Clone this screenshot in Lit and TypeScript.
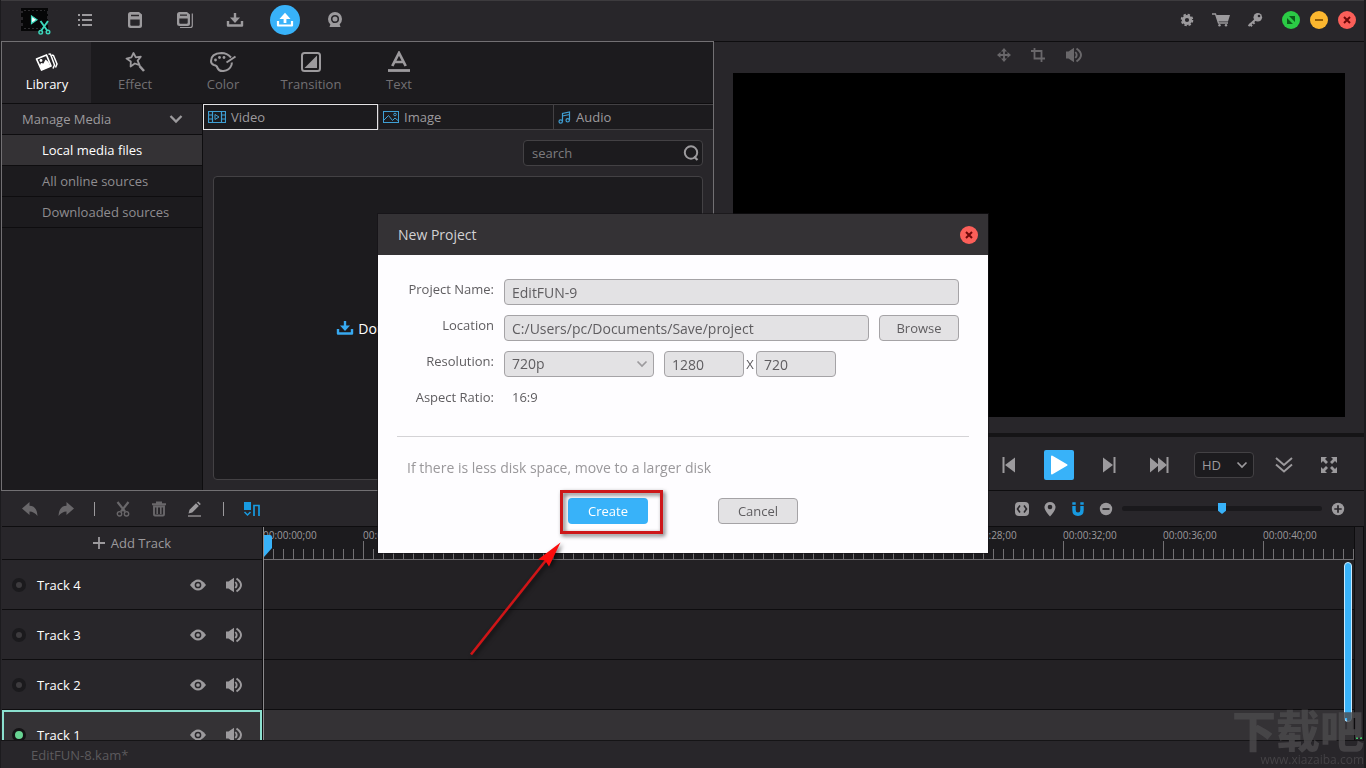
import { LitElement, html, css, svg } from "lit";
import { customElement, property, state } from "lit/decorators.js";
import { classMap } from "lit/directives/class-map.js";

const glyphs: Record<string, { w: number; h: number; body: unknown }> = {
  logo: {
    w: 32, h: 32,
    body: svg`<path d="M1 3h27v3h-1v3h1v2h-1v3h1v3h-1v3h1v6H1v-5h2v-3H1v-3h2v-3H1V8h2V6H1z" fill="#060607"/>
      <path d="M4 5.500h21M4 23.500h17" stroke="#2e2d30" stroke-dasharray="2 2"/>
      <path d="M11.500 11l5.500 3.800-5.500 3.800z" fill="#fff" stroke="#3cd6bb" stroke-width="1.200"/>
      <path d="M20.500 16l7 10M28 16l-7 10" stroke="#3cd6bb" stroke-width="1.900" fill="none"/>
      <circle cx="20.700" cy="27.300" r="1.800" fill="none" stroke="#3cd6bb" stroke-width="1.400"/>
      <circle cx="28" cy="27" r="1.800" fill="none" stroke="#3cd6bb" stroke-width="1.400"/>`,
  },
  menu: {
    w: 16, h: 14,
    body: svg`<path d="M1 2h2M1 7h2M1 12h2M5 2h10M5 7h10M5 12h10" stroke="currentColor" stroke-width="1.900"/>`,
  },
  save: {
    w: 16, h: 18,
    body: svg`<path d="M3.500 1H12l3 2.500v11q0 2.500-2.500 2.500h-9Q1 17 1 14.500v-11Q1 1 3.500 1z" fill="currentColor"/><path d="M4 3.800h8v1.500H4zM3.300 8.500h9.400v5.200q0 1-1 1H4.300q-1 0-1-1z" fill="#28262a"/>`,
  },
  saveAs: {
    w: 18, h: 18,
    body: svg`<path d="M3.500 1H11l3 2.500v9q0 2.500-2.500 2.500h-8Q1 15 1 12.500v-9Q1 1 3.500 1z" fill="currentColor"/><path d="M4 3.500h7v1.300H4zM3.300 7.500h8.400v4.300q0 1-1 1H4.300q-1 0-1-1z" fill="#28262a"/><path d="M16.300 2.500v12q0 2-2 2H4" fill="none" stroke="currentColor" stroke-width="1.200"/>`,
  },
  download: {
    w: 18, h: 16,
    body: svg`<path d="M9 1v6" stroke="currentColor" stroke-width="2.400"/><path d="M4 5.500h10L9 11z" fill="currentColor"/><path d="M2 9v4.500h14V9" fill="none" stroke="currentColor" stroke-width="2.400" stroke-linejoin="round"/>`,
  },
  upload: {
    w: 18, h: 16,
    body: svg`<path d="M9 11V5" stroke="currentColor" stroke-width="2.800"/><path d="M3.500 7h11L9 .8z" fill="currentColor"/><path d="M2 9v4.500h14V9" fill="none" stroke="currentColor" stroke-width="2.200" stroke-linejoin="round"/>`,
  },
  webcam: {
    w: 16, h: 18,
    body: svg`<circle cx="8" cy="8" r="7" fill="currentColor"/><circle cx="8" cy="8" r="3.300" fill="none" stroke="#28262a" stroke-width="1.600"/><path d="M3.500 13L2.500 16h11l-1-3z" fill="currentColor"/>`,
  },
  gear: {
    w: 14, h: 14,
    body: svg`<circle cx="7" cy="7" r="3.600" fill="none" stroke="currentColor" stroke-width="3"/><circle cx="7" cy="7" r="5.400" fill="none" stroke="currentColor" stroke-width="1.800" stroke-dasharray="2.400 1.840"/>`,
  },
  cart: {
    w: 18, h: 14,
    body: svg`<path d="M0 1h3.500l3 9H16" fill="none" stroke="currentColor" stroke-width="1.300"/><path d="M4 2h14l-2 6.500H6z" fill="currentColor"/><circle cx="7.500" cy="12.300" r="1.200" fill="currentColor"/><circle cx="14" cy="12.300" r="1.200" fill="currentColor"/>`,
  },
  key: {
    w: 16, h: 16,
    body: svg`<circle cx="10.800" cy="5.200" r="4.300" fill="currentColor"/><circle cx="12" cy="4" r="1.300" fill="#28262a"/><path d="M8.500 7.500L1.500 14M2.500 11.500l2.500 2.700M5.500 9.500l2 2.300" stroke="currentColor" stroke-width="2"/>`,
  },
  zoomWin: {
    w: 18, h: 18,
    body: svg`<path d="M5 7v6h6zM7 5h6v6z" fill="#0b5d1a"/>`,
  },
  minusWin: { w: 18, h: 18, body: svg`<path d="M5 9h8" stroke="#8a5300" stroke-width="1.800"/>` },
  closeWin: { w: 18, h: 18, body: svg`<path d="M6 6l6 6M12 6l-6 6" stroke="#6d0808" stroke-width="2"/>` },
  library: {
    w: 24, h: 22,
    body: svg`<path d="M1.500 8L11.500 4l4.500 11-9.500 4z" fill="none" stroke="#fff" stroke-width="1.700" stroke-linejoin="round"/><path d="M4.500 15l1.500-3 2.500.5 2-4 3 2.500 2 4.500L7 19z" fill="#fff"/><circle cx="6" cy="9.500" r="1.400" fill="#fff"/><path d="M13.500 3l2 .3L19.500 14l-1.500 3.500M17 4l1.500.5L22 13l-1.500 3.500" fill="none" stroke="#fff" stroke-width="1.500"/>`,
  },
  effect: {
    w: 22, h: 22,
    body: svg`<path d="M9.500 2l2.300 4.300 5-.6-3.200 3.900 2 4.600-4.800-1.700-4.200 3 .2-5L2.500 7.600l4.900-1.200z" fill="none" stroke="currentColor" stroke-width="1.800" stroke-linejoin="round"/><path d="M15.500 15l4.500 5" stroke="currentColor" stroke-width="2.600"/>`,
  },
  color: {
    w: 28, h: 22,
    body: svg`<path d="M22 6.500Q18 2 12.500 2 2 2.500 2 10q0 3 3 4 3 .3 3.500 3 1.500 3.500 6 3 6-.5 8-6 .4-1 .2-2.500" fill="none" stroke="currentColor" stroke-width="2"/><circle cx="6.500" cy="9" r="1.400" fill="currentColor"/><circle cx="10.500" cy="6.500" r="1.400" fill="currentColor"/><circle cx="15" cy="6.500" r="1.400" fill="currentColor"/><path d="M26.500 5.500l-9 6" stroke="currentColor" stroke-width="2"/>`,
  },
  transition: {
    w: 22, h: 22,
    body: svg`<rect x="2" y="2" width="18" height="18" rx="2.500" fill="none" stroke="currentColor" stroke-width="2"/><path d="M17 4.500V17H4.500z" fill="currentColor"/>`,
  },
  text: {
    w: 24, h: 22,
    body: svg`<path d="M5.300 15L12 2l6.700 13M8 11h8" fill="none" stroke="currentColor" stroke-width="2.700"/><path d="M1 19.500h22" stroke="currentColor" stroke-width="2.800"/>`,
  },
  chevron: { w: 14, h: 10, body: svg`<path d="M1.500 2l5.500 5.500L12.500 2" fill="none" stroke="currentColor" stroke-width="2.300"/>` },
  chevronSmall: { w: 12, h: 8, body: svg`<path d="M1.500 1.500L6 6l4.500-4.500" fill="none" stroke="currentColor" stroke-width="1.700"/>` },
  video: {
    w: 18, h: 12,
    body: svg`<path d="M.5.500h17v11H.5zM4.500.500v11M13.500.500v11M.5 4h4M.5 8h4M13.500 4h4M13.500 8h4" fill="none" stroke="#3f9fd4" stroke-width="1.200"/><path d="M7 3.500L11 6 7 8.500z" fill="none" stroke="#3f9fd4"/>`,
  },
  image: {
    w: 16, h: 12,
    body: svg`<rect x=".5" y=".5" width="15" height="11" fill="none" stroke="#3f9fd4"/><path d="M.5 9.500L5.500 4.500l4 5 2.500-2.500 3.500 3" fill="none" stroke="#3f9fd4"/><circle cx="12" cy="3.500" r="1.300" fill="none" stroke="#3f9fd4"/>`,
  },
  audio: {
    w: 13, h: 13,
    body: svg`<path d="M4.500 10.500V2.500l7-1.500V9M4.500 5l7-1.500" fill="none" stroke="#3f9fd4" stroke-width="1.200"/><circle cx="2.700" cy="10.500" r="1.700" fill="none" stroke="#3f9fd4" stroke-width="1.200"/><circle cx="9.700" cy="9.300" r="1.700" fill="none" stroke="#3f9fd4" stroke-width="1.200"/>`,
  },
  search: {
    w: 16, h: 16,
    body: svg`<circle cx="8" cy="7.500" r="6.200" fill="none" stroke="currentColor" stroke-width="2"/><path d="M11 11.500l3.500 3.500" stroke="currentColor" stroke-width="2.200"/>`,
  },
  move: {
    w: 14, h: 14,
    body: svg`<path d="M7 2v10M2 7h10" stroke="currentColor" stroke-width="1.800"/><path d="M7 0l3 3.500H4zM7 14l3-3.500H4zM0 7l3.500-3v6zM14 7l-3.500-3v6z" fill="currentColor"/>`,
  },
  crop: { w: 14, h: 14, body: svg`<path d="M3.500 0v10.500H14M0 3h10.500V14" fill="none" stroke="currentColor" stroke-width="1.800"/>` },
  speaker: {
    w: 18, h: 16,
    body: svg`<path d="M1 4.500h2.500L9 .8v14.400L3.500 11.500H1z" fill="currentColor"/><path d="M10.300 5q2.800 3 0 6" fill="none" stroke="currentColor" stroke-width="1.800"/><path d="M11.500 1.500q9 6.500 0 13" fill="none" stroke="currentColor" stroke-width="2"/>`,
  },
  eye: {
    w: 18, h: 12,
    body: svg`<path d="M1 6q8-11 16 0-8 11-16 0z" fill="currentColor"/><circle cx="9" cy="6" r="2.600" fill="none" stroke="#28262a" stroke-width="1.500"/>`,
  },
  prev: { w: 14, h: 16, body: svg`<path d="M1.500 0v16" stroke="currentColor" stroke-width="2"/><path d="M13 .5v15L3 8z" fill="currentColor"/>` },
  play: { w: 20, h: 22, body: svg`<path d="M3 2.500L17.500 11 3 19.500z" fill="#fff" stroke="#fff" stroke-width="2" stroke-linejoin="round"/>` },
  next: { w: 14, h: 16, body: svg`<path d="M12.500 0v16" stroke="currentColor" stroke-width="2"/><path d="M1 .5v15L11 8z" fill="currentColor"/>` },
  last: { w: 20, h: 16, body: svg`<path d="M18.500 0v16" stroke="currentColor" stroke-width="2"/><path d="M1 .5v15L10 8zM9 .5v15L18 8z" fill="currentColor"/>` },
  collapse: { w: 18, h: 18, body: svg`<path d="M1 2l8 7 8-7M1 8.500l8 7 8-7" fill="none" stroke="currentColor" stroke-width="1.900"/>` },
  expand: {
    w: 18, h: 18,
    body: svg`<path d="M1 1h6L5 3l3 3-2 2-3-3-2 2zM17 1h-6l2 2-3 3 2 2 3-3 2 2zM1 17h6l-2-2 3-3-2-2-3 3-2-2zM17 17h-6l2-2-3-3 2-2 3 3 2-2z" fill="currentColor"/>`,
  },
  undo: { w: 16, h: 14, body: svg`<path d="M0 6.500L7.500 0v3.800Q15 4 15.500 14 12 9.500 7.500 9.500V13z" fill="currentColor"/>` },
  redo: { w: 16, h: 14, body: svg`<path d="M16 6.500L8.500 0v3.800Q1 4 .5 14 4 9.500 8.500 9.500V13z" fill="currentColor"/>` },
  cut: {
    w: 14, h: 16,
    body: svg`<path d="M1.500 1l7.500 9.500M12.500 1L5 10.500" stroke="currentColor" stroke-width="2.200"/><circle cx="3.500" cy="12.800" r="2.200" fill="none" stroke="currentColor" stroke-width="1.400"/><circle cx="10.500" cy="12.800" r="2.200" fill="none" stroke="currentColor" stroke-width="1.400"/>`,
  },
  trash: { w: 16, h: 16, body: svg`<path d="M1 3.200h14M5 1.500h6M3 5.500h10v8q0 1-1 1H4q-1 0-1-1z" fill="none" stroke="currentColor" stroke-width="1.900"/><path d="M6.200 6v7M9.800 6v7" stroke="currentColor" stroke-width="1.600"/>` },
  edit: { w: 16, h: 16, body: svg`<path d="M1.500 12.500l1-3.800L9 2.300l2.800 2.800-6.500 6.400zM10 1.500l1.200-1 2.600 2.600-1.100 1.200z" fill="currentColor"/><path d="M1 15h13" stroke="currentColor" stroke-width="1.300"/>` },
  snap: { w: 18, h: 16, body: svg`<path d="M1 1h7v8H1z" fill="currentColor"/><path d="M1.500 11l3 3 3-3" fill="none" stroke="currentColor" stroke-width="1.500"/><path d="M11 15V4.500h5V15" fill="none" stroke="currentColor" stroke-width="1.700"/>` },
  fit: { w: 16, h: 16, body: svg`<rect x="1" y="1" width="14" height="14" rx="4" fill="currentColor"/><path d="M6 4.500L3.500 8 6 11.500M10 4.500L12.500 8 10 11.500" fill="none" stroke="#28262a" stroke-width="1.600"/>` },
  pin: { w: 12, h: 16, body: svg`<path d="M6 15.500Q0 9 .5 5.500 1.500 1 6 1t5.500 4.500Q12 9 6 15.500z" fill="currentColor"/><circle cx="6" cy="6" r="2.300" fill="#28262a"/>` },
  magnet: { w: 14, h: 16, body: svg`<path d="M3 5v4q0 4.200 4 4.200T11 9V5" fill="none" stroke="currentColor" stroke-width="3.400"/><path d="M1.300 2.500h3.400M9.300 2.500h3.400" stroke="currentColor" stroke-width="2.500"/>` },
  minus: { w: 14, h: 14, body: svg`<circle cx="7" cy="7" r="6.200" fill="currentColor"/><path d="M3.500 7h7" stroke="#28262a" stroke-width="1.800"/>` },
  plus: { w: 14, h: 14, body: svg`<circle cx="7" cy="7" r="6.200" fill="currentColor"/><path d="M3.300 7h7.400M7 3.300v7.400" stroke="#28262a" stroke-width="1.700"/>` },
  add: { w: 12, h: 12, body: svg`<path d="M0 6h12M6 0v12" stroke="currentColor" stroke-width="1.800"/>` },
};

const icon = (name: string) => {
  const g = glyphs[name];
  return html`<svg class="icon" width=${g.w} height=${g.h} viewBox="0 0 ${g.w} ${g.h}" aria-hidden="true">${g.body}</svg>`;
};

const shared = css`
  * { box-sizing: border-box; }
  button, input, select { font: inherit; color: inherit; margin: 0; }
  button { padding: 0; border: 0; background: none; cursor: pointer; }
  .icon { display: block; flex: none; }
  .round {
    width: 18px; height: 18px; border-radius: 50%;
    display: grid; place-items: center;
  }
  .round.green { background: #2bcb45; }
  .round.amber { background: #fcb72f; }
  .round.red { background: #fb5f59; }
`;

@customElement("media-panel")
export class MediaPanel extends LitElement {
  @state() private tab = "Library";
  @state() private kind = "Video";

  static styles = [shared, css`
    :host {
      display: grid; grid-template-rows: 62px minmax(0, 1fr);
      border: 1px solid #727073; background: #1c1b1e; min-width: 0;
    }
    .tabs { display: flex; padding-left: 1px; border-bottom: 1px solid #0e0d0f; }
    .tab {
      width: 88px; display: flex; flex-direction: column; align-items: center;
      padding-top: 9px; gap: 1px; line-height: 20px; color: #727073;
    }
    .tab .icon { color: #9c9a9d; }
    .tab.on { background: #28262a; color: #fff; box-shadow: -1px 0 #28262a; }
    .body { display: grid; grid-template-columns: 201px minmax(0, 1fr); }
    .side { border-right: 1px solid #0e0d0f; }
    .row {
      width: 100%; height: 31px; display: flex; align-items: center; text-align: left;
      padding: 0 19px 0 40px; border-bottom: 1px solid #0e0d0f; color: #8f8d90;
    }
    .row.head { padding-left: 20px; justify-content: space-between; background: #28262a; color: #9c9a9d; }
    .row.on { background: #343235; color: #fff; }
    .main { display: grid; grid-template-rows: 26px 26px minmax(0, 1fr); row-gap: 10px; background: #28262a; }
    .kinds { display: grid; grid-template-columns: 175px 175px minmax(0, 1fr); }
    .kind {
      display: flex; align-items: center; gap: 5px; padding-left: 4px;
      border: 1px solid #434144; border-right-width: 0; background: #1c1b1e; color: #9c9a9d;
    }
    .kind.on { border: 1px solid #e4e3e5; }
    .search {
      justify-self: end; width: 180px; margin-right: 10px; display: flex; align-items: center;
      border: 1px solid #434144; border-radius: 4px; background: #1c1b1e; padding: 0 3px 0 8px; color: #9c9a9d;
    }
    .search input { flex: 1; min-width: 0; border: 0; padding: 0; background: none; outline: 0; }
    .search input::placeholder { color: #7d7b7e; }
    .drop {
      margin: 0 10px 10px; display: flex; align-items: center; justify-content: center; gap: 4px;
      border: 1px solid #434144; border-radius: 4px; background: #1c1b1e; color: #fff; font-size: 14px;
    }
    .drop .icon { color: #37a9f0; }
  `];

  render() {
    const tabs = [["Library", "library"], ["Effect", "effect"], ["Color", "color"], ["Transition", "transition"], ["Text", "text"]];
    const kinds = [["Video", "video"], ["Image", "image"], ["Audio", "audio"]];
    return html`
      <nav class="tabs">
        ${tabs.map(([t, i]) => html`<button class=${classMap({ tab: true, on: t === this.tab })} @click=${() => (this.tab = t)}>${icon(i)}<span>${t}</span></button>`)}
      </nav>
      <div class="body">
        <aside class="side">
          <button class="row head"><span>Manage Media</span>${icon("chevron")}</button>
          <button class="row on">Local media files</button>
          <button class="row">All online sources</button>
          <button class="row">Downloaded sources</button>
        </aside>
        <section class="main">
          <div class="kinds">
            ${kinds.map(([k, i]) => html`<button class=${classMap({ kind: true, on: k === this.kind })} @click=${() => (this.kind = k)}>${icon(i)}<span>${k}</span></button>`)}
          </div>
          <label class="search"><input type="text" placeholder="search" aria-label="search" />${icon("search")}</label>
          <button class="drop">${icon("download")}<span>Double click here to import media</span></button>
        </section>
      </div>`;
  }
}

@customElement("preview-panel")
export class PreviewPanel extends LitElement {
  static styles = [shared, css`
    :host {
      display: grid; grid-template-rows: 31px minmax(0, 1fr) 16px 58px;
      border-top: 1px solid #0e0d0f; min-width: 0; color: #9c9a9d;
    }
    .adjust { display: flex; justify-content: center; align-items: center; gap: 20px; color: #69676a; padding: 0 0 6px 2px; }
    .screen { background: #000; margin: 0 19px; }
    .controls {
      grid-row: 4; display: flex; justify-content: flex-end; align-items: center; gap: 20px; padding: 2px 20px 0 0;
      border-top: 4px solid #151416; border-bottom: 1px solid #0e0d0f;
    }
    .ctl { width: 30px; height: 30px; display: grid; place-items: center; }
    .ctl.play { background: #38b2f9; border-radius: 2px; }
    .group { display: flex; align-items: center; gap: 15px; }
    .quality { position: relative; width: 60px; height: 26px; }
    .quality select {
      appearance: none; width: 100%; height: 100%; border: 1px solid #434144; border-radius: 4px;
      background: #1c1b1e; padding: 0 7px;
    }
    .quality .icon { position: absolute; right: 6px; top: 9px; pointer-events: none; }
  `];

  render() {
    return html`
      <div class="adjust">
        <button aria-label="Move">${icon("move")}</button>
        <button aria-label="Crop">${icon("crop")}</button>
        <button aria-label="Volume">${icon("speaker")}</button>
      </div>
      <div class="screen"></div>
      <div class="controls">
        <button class="ctl" aria-label="Previous frame">${icon("prev")}</button>
        <button class="ctl play" aria-label="Play">${icon("play")}</button>
        <button class="ctl" aria-label="Next frame">${icon("next")}</button>
        <button class="ctl" aria-label="Go to end">${icon("last")}</button>
        <div class="group">
          <div class="quality">
            <select aria-label="Preview quality"><option>HD</option><option>SD</option></select>${icon("chevronSmall")}
          </div>
          <button class="ctl" aria-label="Collapse">${icon("collapse")}</button>
          <button class="ctl" aria-label="Full screen">${icon("expand")}</button>
        </div>
      </div>`;
  }
}

@customElement("time-line")
export class TimeLine extends LitElement {
  @state() private active = 1;

  static styles = [shared, css`
    :host { display: grid; grid-template-rows: 36px minmax(0, 1fr); min-width: 0; min-height: 0; color: #9c9a9d; }
    .bar {
      display: flex; align-items: center; justify-content: space-between;
      padding: 0 16px; border-bottom: 1px solid #0e0d0f;
    }
    .tools { display: flex; align-items: center; gap: 12px; color: #69676a; }
    .tool { width: 24px; height: 24px; display: grid; place-items: center; }
    .tool.lit { color: #9c9a9d; }
    .tool.blue { color: #189ae0; }
    .sep { width: 1px; height: 14px; margin: 0 4px; background: #9c9a9d; }
    .zoom { display: flex; align-items: center; gap: 8px; }
    .zoom .tool { width: 20px; }
    .scale { display: flex; align-items: center; gap: 6px; }
    .scale input { appearance: none; width: 200px; height: 16px; background: none; }
    .scale input::-webkit-slider-runnable-track { height: 5px; border-radius: 3px; background: #1a191c; }
    .scale input::-webkit-slider-thumb {
      appearance: none; width: 8px; height: 11px; margin-top: -3px; background: #38b2f9;
      clip-path: polygon(0 0, 100% 0, 100% 70%, 50% 100%, 0 70%);
    }
    .area { display: grid; grid-template-columns: 261px minmax(0, 1fr) 10px; min-height: 0; }
    .heads { border-right: 1px solid #0e0d0f; overflow: hidden; min-height: 0; }
    .add {
      width: 100%; height: 33px; display: flex; align-items: center; justify-content: center; gap: 6px;
      border-bottom: 1px solid #0e0d0f;
    }
    .head {
      height: 50px; display: flex; align-items: center;
      padding: 0 19px 0 10px; border-bottom: 1px solid #0e0d0f;
    }
    .head label { flex: 1; color: #fff; padding-left: 11px; }
    .pair { display: flex; gap: 18px; align-items: center; }
    .head.on { background: #343235; border: 2px solid #8be0cf; padding: 0 17px 0 8px; }
    .dot {
      appearance: none; width: 14px; height: 14px; border-radius: 50%;
      background: #3d3b3e; border: 4px solid #1b1a1d;
    }
    .dot:checked { background: #68d392; border-width: 3px; border-color: #141315; }
    .lanes { position: relative; border-left: 1px solid #8c8a8d; background: #232124; overflow: hidden; min-height: 0; }
    .ruler {
      height: 33px; display: flex; margin-left: -1px; border-bottom: 1px solid #727073; font-size: 10px; line-height: 14px; padding-top: 1px;
      background:
        repeating-linear-gradient(90deg, #727073 0 1px, transparent 1px 10px) 0 100% / 100% 10px no-repeat,
        repeating-linear-gradient(90deg, #727073 0 1px, transparent 1px 100px) 0 100% / 100% 18px no-repeat,
        #1c1b1e;
    }
    .ruler span { flex: 0 0 100px; }
    .lane { height: 50px; border-bottom: 1px solid #0e0d0f; }
    .lane.on { background: #343235; }
    .needle { position: absolute; left: 0; top: 8px; }
    .scroll {
      position: absolute; right: 2px; top: 35px; width: 8px; height: 160px;
      border: 1px solid #c9e8fc; border-radius: 4px; background: #38b2f9;
    }
    .meter {
      border-left: 1px solid #0e0d0f; border-right: 1px solid #0e0d0f;
      display: flex; align-items: flex-end; justify-content: center; gap: 2px; padding-bottom: 1px;
    }
    .meter i { width: 2px; height: 2px; background: #3fc765; }
  `];

  render() {
    const tracks = [4, 3, 2, 1];
    const marks = Array.from({ length: 11 }, (_, i) => `00:00:${String(i * 4).padStart(2, "0")};00`);
    return html`
      <div class="bar">
        <div class="tools">
          <button class="tool" aria-label="Undo">${icon("undo")}</button>
          <button class="tool" aria-label="Redo">${icon("redo")}</button>
          <span class="sep"></span>
          <button class="tool" aria-label="Cut">${icon("cut")}</button>
          <button class="tool" aria-label="Delete">${icon("trash")}</button>
          <button class="tool lit" aria-label="Edit">${icon("edit")}</button>
          <span class="sep"></span>
          <button class="tool blue" aria-label="Snap">${icon("snap")}</button>
        </div>
        <div class="zoom">
          <button class="tool" aria-label="Fit">${icon("fit")}</button>
          <button class="tool" aria-label="Marker">${icon("pin")}</button>
          <button class="tool blue" aria-label="Magnet">${icon("magnet")}</button>
          <div class="scale">
            <button class="tool" aria-label="Zoom out">${icon("minus")}</button>
            <input type="range" min="0" max="100" .value=${"50"} aria-label="Timeline zoom" />
            <button class="tool" aria-label="Zoom in">${icon("plus")}</button>
          </div>
        </div>
      </div>
      <div class="area">
        <div class="heads">
          <button class="add">${icon("add")}<span>Add Track</span></button>
          ${tracks.map((n) => html`
            <div class=${classMap({ head: true, on: n === this.active })}>
              <input class="dot" type="radio" name="track" id="track-${n}" .checked=${n === this.active} @change=${() => (this.active = n)} />
              <label for="track-${n}">Track ${n}</label>
              <div class="pair">
                <button aria-label="Show track ${n}">${icon("eye")}</button>
                <button aria-label="Mute track ${n}">${icon("speaker")}</button>
              </div>
            </div>`)}
        </div>
        <div class="lanes">
          <div class="ruler">${marks.map((m) => html`<span>${m}</span>`)}</div>
          ${tracks.map((n) => html`<div class=${classMap({ lane: true, on: n === this.active })}></div>`)}
          <svg class="needle" width="8" height="22" viewBox="0 0 8 22"><path d="M0 0h6q2 0 2 2v11l-8 9z" fill="#38b2f9" /></svg>
          <div class="scroll"></div>
        </div>
        <div class="meter"><i></i><i></i></div>
      </div>`;
  }
}

@customElement("project-dialog")
export class ProjectDialog extends LitElement {
  @property() name = "EditFUN-9";
  @property() location = "C:/Users/pc/Documents/Save/project";

  static styles = [shared, css`
    :host {
      position: fixed; inset: 0; padding-bottom: 1px;
      display: grid; place-items: center; color: #5f5d60;
    }
    .dialog { position: relative; width: 610px; background: #fefdff; box-shadow: 0 0 0 1px rgba(20, 19, 21, 0.6); }
    header {
      height: 41px; display: flex; align-items: center; justify-content: space-between;
      padding: 0 10px 0 20px; background: #343235; color: #d2d1d3; font-size: 14px;
    }
    form { padding: 24px 29px 29px; }
    .fields { display: grid; grid-template-columns: 87px minmax(0, 1fr); column-gap: 10px; row-gap: 10px; line-height: 20px; }
    .name { text-align: right; white-space: nowrap; justify-self: end; }
    .line { display: flex; align-items: center; gap: 10px; }
    .box {
      height: 26px; border: 1px solid #a5a3a6; border-radius: 4px; background: #e3e2e4;
      padding: 0 7px; min-width: 0; flex: 1; outline: 0; font-size: 14px;
    }
    .box.short { flex: 0 0 80px; }
    .size { display: flex; align-items: center; }
    .size .by { width: 12px; text-align: center; }
    .preset { position: relative; width: 150px; display: flex; }
    .preset select { appearance: none; }
    .preset .icon { position: absolute; right: 6px; top: 9px; color: #9c9a9d; pointer-events: none; }
    .btn { width: 80px; height: 26px; border: 1px solid #a5a3a6; border-radius: 4px; background: #e3e2e4; }
    .btn.primary { border: 0; background: #38b2f9; color: #fff; }
    .ratio { padding-left: 8px; }
    hr { margin: 29px -10px 21px; border: 0; border-top: 1px solid #d4d3d6; }
    .note { margin: 0 0 20px; font-size: 14px; line-height: 20px; color: #9a989b; }
    .actions { display: flex; justify-content: center; gap: 70px; }
    .callout { position: absolute; left: 84px; top: 268px; pointer-events: none; overflow: visible; filter: drop-shadow(2px 2px 2px rgba(0, 0, 0, 0.6)); }
  `];

  render() {
    return html`
      <div class="dialog" role="dialog" aria-label="New Project">
        <header><span>New Project</span><button class="round red" aria-label="Close">${icon("closeWin")}</button></header>
        <form @submit=${(e: Event) => e.preventDefault()}>
          <div class="fields">
            <label class="name" for="name">Project Name:</label>
            <div class="line"><input class="box" id="name" type="text" .value=${this.name} /></div>
            <label class="name" for="location">Location</label>
            <div class="line"><input class="box" id="location" type="text" .value=${this.location} /><button class="btn" type="button">Browse</button></div>
            <label class="name" for="preset">Resolution:</label>
            <div class="line">
              <div class="preset"><select class="box" id="preset"><option>720p</option><option>1080p</option></select>${icon("chevronSmall")}</div>
              <div class="size">
                <input class="box short" type="text" aria-label="Width" .value=${"1280"} /><span class="by">X</span><input class="box short" type="text" aria-label="Height" .value=${"720"} />
              </div>
            </div>
            <span class="name">Aspect Ratio:</span>
            <span class="ratio">16:9</span>
          </div>
          <hr />
          <p class="note">If there is less disk space, move to a larger disk</p>
          <div class="actions"><button class="btn primary">Create</button><button class="btn" type="button">Cancel</button></div>
        </form>
        <svg class="callout" width="206" height="178" viewBox="462 482 206 178" aria-hidden="true">
          <rect x="561.500" y="491.500" width="100" height="41" fill="none" stroke="#cd1719" stroke-width="3" />
          <path d="M471 654.500L547 559" stroke="#cf1517" stroke-width="2.600" />
          <path d="M560.500 542.500L549 566.500l-4-6-7-1z" fill="#fb0d0d" />
        </svg>
      </div>`;
  }
}

@customElement("app-root")
export class AppRoot extends LitElement {
  static styles = [shared, css`
    :host {
      display: grid; grid-template-rows: 41px minmax(0, 1fr) 249px 28px; height: 100vh; overflow: hidden;
      border-left: 1px solid #1c1b1e; border-right: 2px solid #1c1b1e; background: #28262a; color: #9c9a9d;
      font: 13px "Open Sans", "Noto Sans", sans-serif; box-sizing: border-box; position: relative;
    }
    .top { display: flex; align-items: center; padding: 0 8px 2px 19px; border-top: 1px solid #3d3b3e; }
    .menu { display: flex; align-items: center; gap: 20px; flex: 1; }
    .item { width: 30px; height: 30px; display: grid; place-items: center; border-radius: 50%; }
    .item.blue { background: #38b2f9; color: #fff; }
    .links, .window { display: flex; align-items: center; gap: 10px; }
    .links { margin-right: 15px; }
    .link { width: 24px; height: 24px; display: grid; place-items: center; }
    .work { display: grid; grid-template-columns: minmax(0, 713fr) minmax(0, 650fr); min-height: 0; }
    time-line { padding-left: 1px; }
    footer { display: flex; align-items: center; padding-left: 30px; color: #5c5a5d; border-top: 1px solid #151416; }
    .mark { position: absolute; right: 0; bottom: 0; color: #4c4a4d; opacity: 0.8; pointer-events: none; text-align: right; }
    .mark b { display: block; font: 900 44px/44px "Noto Sans CJK SC", sans-serif; }
    .mark span { display: block; font-size: 12px; line-height: 17px; }
  `];

  render() {
    return html`
      <header class="top">
        <div class="menu">
          <div class="item">${icon("logo")}</div>
          <button class="item" aria-label="Menu">${icon("menu")}</button>
          <button class="item" aria-label="Save">${icon("save")}</button>
          <button class="item" aria-label="Save as">${icon("saveAs")}</button>
          <button class="item" aria-label="Import">${icon("download")}</button>
          <button class="item blue" aria-label="Export">${icon("upload")}</button>
          <button class="item" aria-label="Record">${icon("webcam")}</button>
        </div>
        <div class="links">
          <button class="link" aria-label="Settings">${icon("gear")}</button>
          <button class="link" aria-label="Store">${icon("cart")}</button>
          <button class="link" aria-label="License">${icon("key")}</button>
        </div>
        <div class="window">
          <button class="round green" aria-label="Maximize">${icon("zoomWin")}</button>
          <button class="round amber" aria-label="Minimize">${icon("minusWin")}</button>
          <button class="round red" aria-label="Close window">${icon("closeWin")}</button>
        </div>
      </header>
      <main class="work">
        <media-panel></media-panel>
        <preview-panel></preview-panel>
      </main>
      <time-line></time-line>
      <footer>EditFUN-8.kam*</footer>
      <project-dialog></project-dialog>
      <div class="mark"><b>下载吧</b><span>www.xiazaiba.com</span></div>`;
  }
}
